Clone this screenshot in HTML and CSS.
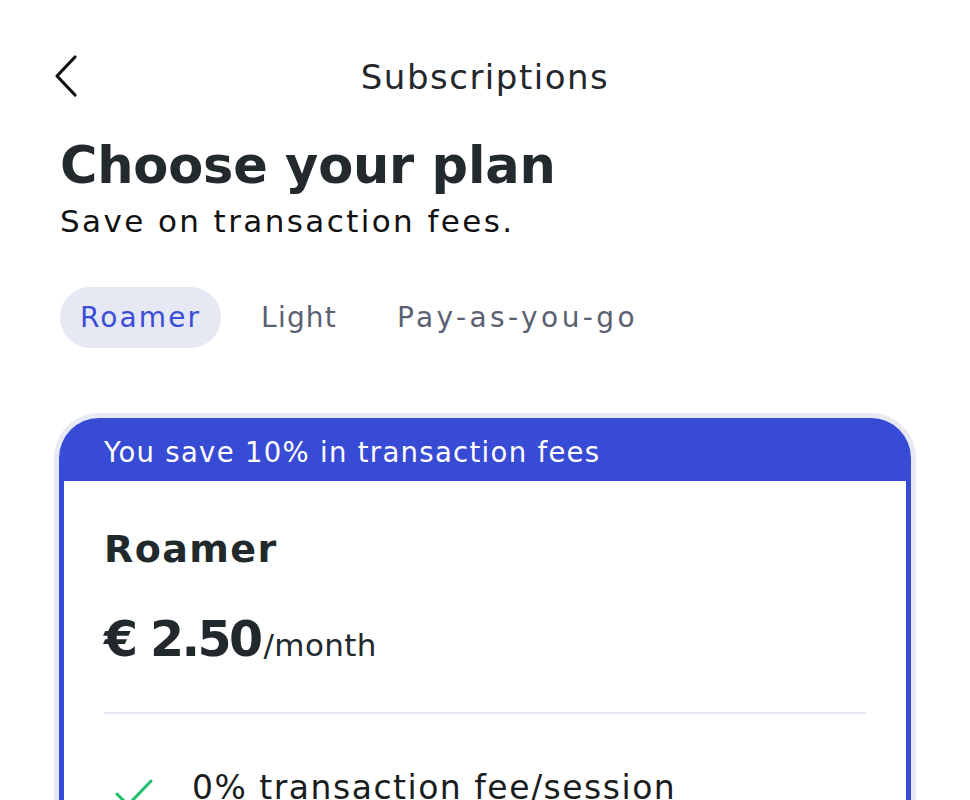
FILE: index.html
```html
<!DOCTYPE html>
<html lang="en">
<head>
<meta charset="utf-8">
<title>Subscriptions</title>
<link rel="stylesheet" href="styles.css">
</head>
<body>
<div class="page">
  <header class="topbar">
    <button class="back" aria-label="Back">
      <svg width="26" height="44" viewBox="0 0 26 44"><path d="M21 3 L3 22 L21 41" fill="none" stroke="#111" stroke-width="3.2" stroke-linecap="round" stroke-linejoin="round"/></svg>
    </button>
    <div class="title">Subscriptions</div>
  </header>

  <h1 class="heading">Choose your plan</h1>
  <p class="sub">Save on transaction fees.</p>

  <nav class="tabs">
    <span class="tab active">Roamer</span>
    <span class="tab">Light</span>
    <span class="tab">Pay-as-you-go</span>
  </nav>

  <section class="card">
    <div class="card-head">You save 10% in transaction fees</div>
    <div class="card-body">
      <div class="plan-name">Roamer</div>
      <div class="price"><span class="amount">€ 2.50</span><span class="per">/month</span></div>
      <hr class="divider">
      <ul class="features">
        <li><svg class="check" width="40" height="30" viewBox="0 0 40 30"><path d="M3 16 L14 27 L37 3" fill="none" stroke="#1fc16b" stroke-width="3" stroke-linecap="round" stroke-linejoin="round"/></svg><span>0% transaction fee/session</span></li>
      </ul>
    </div>
  </section>
</div>
</body>
</html>
```
FILE: styles.css
```css
* { box-sizing: border-box; }
html, body { margin: 0; background: #fff; }
body {
  font-family: "DejaVu Sans", "Open Sans", sans-serif;
  color: #22292c;
  overflow: hidden;
  height: 800px;
}
.page {
  padding: 0 59px;
}
.topbar {
  position: relative;
  height: 116px;
  display: flex;
  align-items: center;
  justify-content: center;
  padding-top: 38px;
}
.back {
  position: absolute;
  left: -5px;
  top: 54px;
  border: 0;
  background: none;
  padding: 0;
  width: 26px;
  height: 44px;
}
.title {
  font-size: 34px;
  color: #25282b;
  letter-spacing: 1.5px;
}
.heading {
  margin: 22px 0 0 1px;
  font-size: 51px;
  font-weight: 700;
  line-height: 56px;
  letter-spacing: -0.2px;
  color: #232a2d;
}
.sub {
  margin: 9px 0 0 1px;
  font-size: 31px;
  line-height: 36px;
  letter-spacing: 2.4px;
  color: #111;
}
.tabs {
  display: flex;
  align-items: center;
  gap: 20px;
  margin-top: 48px;
  margin-left: 1px;
}
.tab {
  font-size: 28px;
  color: #5b6172;
  height: 61px;
  display: flex;
  align-items: center;
  padding: 0 20px;
  letter-spacing: 2.1px;
}
.tab.active {
  background: #e6e8f4;
  color: #3b4ed6;
  border-radius: 31px;
  padding: 0 20px 0 20px;
}
.tab:nth-child(2) { letter-spacing: 1.2px; }
.tab:last-child { letter-spacing: 3.4px; }
.card {
  margin-top: 70px;
  border: 5px solid #384bd5;
  border-bottom: 0;
  border-radius: 40px 40px 0 0;
  box-shadow: 0 0 0 5px #e7e9f3;
  background: #384bd5;
  height: 400px;
  overflow: hidden;
}
.card-head {
  background: #384bd5;
  color: #fff;
  font-size: 27.5px;
  letter-spacing: 1.3px;
  height: 58px;
  display: flex;
  align-items: center;
  padding: 0 40px;
}
.card-body {
  background: #fff;
  height: 100%;
  padding: 44px 40px 0 40px;
}
.plan-name {
  font-size: 38px;
  font-weight: 700;
  line-height: 48px;
  letter-spacing: 1.4px;
}
.price {
  margin-top: 39px;
  display: flex;
  align-items: baseline;
}
.amount {
  font-size: 49px;
  font-weight: 700;
  line-height: 56px;
  letter-spacing: -2.6px;
  margin-right: 3px;
}
.per {
  font-size: 31px;
  color: #22292c;
  letter-spacing: 0.4px;
}
.divider {
  margin: 44px 0 0 0;
  border: 0;
  height: 2px;
  background: #e4e7ef;
}
.features {
  list-style: none;
  margin: 54px 0 0 0;
  padding: 0;
}
.features li {
  display: flex;
  align-items: flex-start;
  gap: 38px;
  font-size: 33px;
  line-height: 40px;
  letter-spacing: 1.5px;
  color: #1a1d20;
}
.check { margin: 10px 0 0 10px; flex: none; }
```
